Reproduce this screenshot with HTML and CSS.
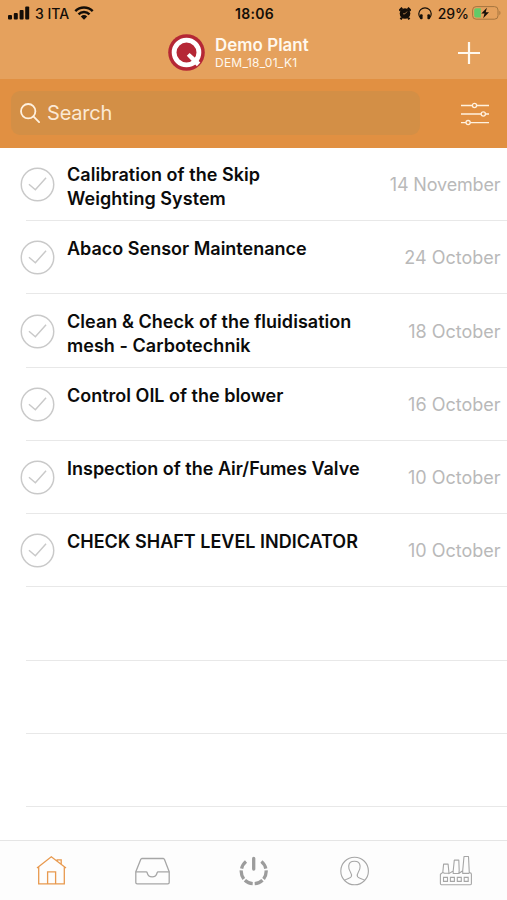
FILE: index.html
```html
<!DOCTYPE html>
<html lang="en">
<head>
<meta charset="utf-8">
<meta name="viewport" content="width=device-width, initial-scale=1">
<title>Demo Plant</title>
<link rel="stylesheet" href="styles.css">
</head>
<body>
<svg class="defs" width="0" height="0" aria-hidden="true">
  <symbol id="check" viewBox="0 0 36 36">
    <circle cx="18" cy="18" r="16.7"/>
    <path d="M9.200 17.800l6.600 5.600L26.800 11"/>
  </symbol>
</svg>
<div class="app">
  <header class="top">
    <div class="status">
      <div class="status-left">
        <svg class="signal" viewBox="0 0 22 14"><rect x="0" y="9" width="4" height="4.6" rx="1"/><rect x="5.8" y="7" width="4" height="6.6" rx="1"/><rect x="11.6" y="4" width="4" height="9.6" rx="1"/><rect x="17.2" y="0.6" width="4" height="13" rx="1"/></svg>
        <span class="carrier">3 ITA</span>
        <svg class="wifi" viewBox="0 0 20 14"><path d="M1.3 5.1a12.5 12.5 0 0 1 17.4 0M4.5 8.3a8 8 0 0 1 11 0" fill="none" stroke="#140e08" stroke-width="2.5"/><path d="M6.8 10.5a4.7 4.7 0 0 1 6.4 0L10 13.8z"/></svg>
      </div>
      <span class="clock">18:06</span>
      <div class="status-right">
        <svg class="alarm" viewBox="0 0 12 13"><circle cx="6" cy="6.5" r="5.3"/><path d="M.3 3.7L3.2.8M11.7 3.7L8.8.8M1.500 12.300l1.400-1.500M10.500 12.300l-1.400-1.500" stroke="#140e08" stroke-width="2.200"/><path d="M8 4.600L6 6.800H4" fill="none" stroke="#c58a4f" stroke-width=".8"/></svg>
        <svg class="phones" viewBox="0 0 14 13"><path d="M2.600 11.200C.8 9.500.8 7.900.8 6.800a6.200 5.900 0 0 1 12.400 0c0 1.100 0 2.700-1.800 4.400" fill="none" stroke="#140e08" stroke-width="1.200"/><rect x="2" y="7.300" width="2.600" height="5" rx="1"/><rect x="9.400" y="7.300" width="2.600" height="5" rx="1"/></svg>
        <span class="percent">29%</span>
        <svg class="battery" viewBox="0 0 29 14"><rect x=".6" y=".6" width="25.400" height="12.600" rx="3.500" fill="none" stroke="#a5753f" stroke-width="1"/><path d="M27.400 4.800c1.400.600 1.400 3.800 0 4.400z" fill="#a5753f"/><path d="M4 2.200h4.800v9.400H4A1.800 1.800 0 0 1 2.200 9.800V4A1.800 1.800 0 0 1 4 2.200z" fill="#62cb68"/><path d="M14.900 1.800L9.300 7.600h3.200l-1.300 4.600 5.800-6h-3.300z"/></svg>
      </div>
    </div>
    <div class="titlebar">
      <div class="plant">
        <svg class="logo" viewBox="0 0 37 37"><circle cx="18.500" cy="18.500" r="18.300" fill="#b52735"/><circle cx="18.500" cy="18.500" r="12.400" fill="none" stroke="#fff" stroke-width="4.800"/><path d="M18.800 21.800l2.800-2.900L32.300 28.600l-3.400 3.700z" fill="#fff"/></svg>
        <div class="names"><div class="name">Demo Plant</div><div class="code">DEM_18_01_K1</div></div>
      </div>
      <svg class="plus" viewBox="0 0 22 22"><path d="M11 0v22M0 11h22"/></svg>
    </div>
  </header>
  <div class="searchbar">
    <div class="field">
      <svg class="glass" viewBox="0 0 20 20"><circle cx="8.200" cy="8.200" r="7.200"/><path d="M13.400 13.400l5.700 5.700"/></svg>
      <span class="hint">Search</span>
    </div>
    <svg class="filters" viewBox="0 0 28 24"><path d="M0 3.500h11.300M15.700 3.500H28M0 12h20.100M24.500 12H28M0 20.600h4.900M9.300 20.600H28"/><circle cx="13.500" cy="3.500" r="2.100"/><circle cx="22.300" cy="12" r="2.100"/><circle cx="7.100" cy="20.600" r="2.100"/></svg>
  </div>
  <main class="list">
    <div class="row"><svg class="check"><use href="#check"/></svg><div class="cell"><div class="task two">Calibration of the Skip<br>Weighting System</div><div class="date long">14 November</div></div></div>
    <div class="row"><svg class="check"><use href="#check"/></svg><div class="cell"><div class="task">Abaco Sensor Maintenance</div><div class="date">24 October</div></div></div>
    <div class="row"><svg class="check"><use href="#check"/></svg><div class="cell"><div class="task two">Clean &amp; Check of the fluidisation<br>mesh - Carbotechnik</div><div class="date">18 October</div></div></div>
    <div class="row"><svg class="check"><use href="#check"/></svg><div class="cell"><div class="task">Control OIL of the blower</div><div class="date">16 October</div></div></div>
    <div class="row"><svg class="check"><use href="#check"/></svg><div class="cell"><div class="task">Inspection of the Air/Fumes Valve</div><div class="date">10 October</div></div></div>
    <div class="row"><svg class="check"><use href="#check"/></svg><div class="cell"><div class="task">CHECK SHAFT LEVEL INDICATOR</div><div class="date">10 October</div></div></div>
    <div class="row"></div>
    <div class="row"></div>
    <div class="row"></div>
  </main>
  <nav class="tabs">
    <div class="tab active"><svg viewBox="0 0 36 36"><path d="M4 15L18.300 3.800 33 15M5.700 13.800v17h25.600v-17M14.600 30.800v-12h8v12M24.200 8V6.800h4v4.200"/></svg></div>
    <div class="tab"><svg viewBox="0 0 36 36"><path d="M7.800 5.500h21.600l1 .8 4.800 12.500v10.600a1.400 1.400 0 0 1-1.400 1.400H3.200a1.400 1.400 0 0 1-1.400-1.400V18.800L6.800 6.300z" stroke-linejoin="round"/><path d="M1.800 18.800h10.400c.6 0 .8.400 1 1 1.300 5.400 8.600 5.400 9.900 0 .2-.6.400-1 1-1h11.100"/></svg></div>
    <div class="tab power"><svg viewBox="0 0 36 36"><path class="stem" d="M17.700 5.500v10.500"/><path d="M25.400 8.500A12.300 12.300 0 0 1 29.800 15.700M30.100 17.300A12.300 12.300 0 0 1 27.600 26M26.500 27.200A12.300 12.300 0 0 1 18.700 30.600M10 8.500A12.300 12.300 0 0 0 5.600 15.700M5.300 17.300A12.300 12.300 0 0 0 7.800 26M8.900 27.200A12.300 12.300 0 0 0 16.700 30.600"/></svg></div>
    <div class="tab thin"><svg viewBox="0 0 36 36"><circle cx="17.600" cy="18" r="13.800"/><path d="M7.400 27.400c2-1.700 6.100-2 6.900-3.800.5-1.200.3-2.600-.7-4.100-1.400-2.200-2.100-4-1.900-6.400.2-3.200 2.300-4.900 5.700-4.900s5.500 1.700 5.700 4.900c.2 2.400-.5 4.200-1.900 6.400-1 1.500-1.200 2.900-.7 4.100.8 1.800 5.300 2.100 7.300 3.800"/></svg></div>
    <div class="tab thin"><svg viewBox="0 0 36 36"><path d="M3.800 31.800a1.400 1.400 0 0 1-1.400-1.400v-9.100l2.400-1.900.8-8.300h4.500l.8 8.300v1.200l4.300-2.600 1.100-10.900h4.500l.4 10.600-.4 2.800 3.900-2.800 1.300-14.200h4.500l.8 16.400h.8a1.300 1.300 0 0 1 1.300 1.300v9.200a1.400 1.400 0 0 1-1.400 1.400zM4.800 19.400l1.700.8h4.400M15.200 18v2.500h5.600M24.700 17.700v2.700H31" stroke-linejoin="round"/><path d="M5.500 24.400h4v4h-4zM12.400 24.400h4v4h-4zM19.300 24.400h4v4h-4zM26.200 24.400h4v4h-4z"/></svg></div>
  </nav>
</div>
</body>
</html>
```
FILE: styles.css
```css
* { box-sizing: border-box; }
body { margin: 0; background: #fff; font-family: Inter, "Liberation Sans", sans-serif; color: #0b0b0b; }
svg { display: block; flex: none; }
.defs { height: 0; }
.app { width: 507px; height: 900px; display: flex; flex-direction: column; overflow: hidden; }
.top { height: 79px; background: #e5a15d; }
.status { height: 26px; display: grid; grid-template-columns: 1fr auto 1fr; align-items: center; padding: 0 6px 0 8px; color: #140e08; fill: #140e08; font-size: 14px; font-weight: 500; }
.status-left, .status-right { display: flex; align-items: center; }
.status-right { justify-content: flex-end; }
.signal { width: 22px; height: 14px; }
.carrier { margin-left: 5px; font-size: 14px; }
.wifi { width: 20px; height: 14px; margin-left: 5px; }
.clock { font-weight: 600; letter-spacing: .3px; }
.alarm { width: 12px; height: 13px; }
.phones { width: 14px; height: 13px; margin: 0 6px 0 7px; }
.battery { width: 29px; height: 14px; margin-left: 3px; }
.titlebar { height: 53px; display: flex; justify-content: flex-end; align-items: center; padding-right: 27px; }
.plant { display: flex; align-items: center; gap: 10px; width: 290px; }
.logo { width: 37px; height: 37px; }
.names { color: #fff8ee; white-space: nowrap; padding-top: 1px; }
.name { font-size: 16.900px; line-height: 19px; font-weight: 600; letter-spacing: .05px; }
.code { font-size: 12px; line-height: 15px; letter-spacing: .25px; }
.plus { width: 22px; height: 22px; stroke: #fff8ee; stroke-width: 2.200; }
.searchbar { height: 68.500px; background: #e19042; display: flex; align-items: center; justify-content: space-between; padding: 0 18px 0 11px; }
.field { width: 409px; height: 44px; border-radius: 9px; background: #d38f46; display: flex; align-items: center; padding-left: 9px; gap: 7px; }
.glass { width: 20px; height: 20px; fill: none; stroke: #fff1df; stroke-width: 1.800; stroke-linecap: round; }
.hint { font-size: 20px; color: #fbe9d5; letter-spacing: -.2px; }
.filters { width: 28px; height: 24px; margin-top: 2px; fill: none; stroke: #fff1df; stroke-width: 1.300; }
.list { flex: 1; padding-top: .5px; }
.row { height: 73.250px; display: flex; align-items: stretch; padding-left: 20px; background: linear-gradient(#e8e8e8, #e8e8e8) 26px 100% / 100% 1.200px no-repeat; }
.check { width: 35px; height: 35px; margin-top: 19px; fill: none; stroke: #c9c9c9; stroke-width: 1.500; }
.cell { flex: 1; display: flex; justify-content: space-between; padding: 0 6.500px 0 12px; }
.task { padding-top: 16px; font-size: 18px; line-height: 24px; font-weight: 600; white-space: nowrap; }
.two { padding-top: 15px; letter-spacing: .04px; }
.date { padding-top: 25px; font-size: 18px; line-height: 24px; color: #b9b9b9; white-space: nowrap; }
.long { letter-spacing: -.14px; }
.tabs { height: 60px; border-top: 1px solid #e5e5e5; background: #fdfdfd; display: flex; align-items: center; }
.tab { flex: 1; display: flex; justify-content: center; }
.tab svg { width: 36px; height: 36px; fill: none; stroke: #a6a6a6; stroke-width: 1.300; }
.active svg { stroke: #e8994e; }
.tab.power svg { stroke: #9c9c9c; stroke-width: 3.300; }
.stem { stroke-linecap: round; }
.tab.thin svg { stroke-width: 1.100; }
```
